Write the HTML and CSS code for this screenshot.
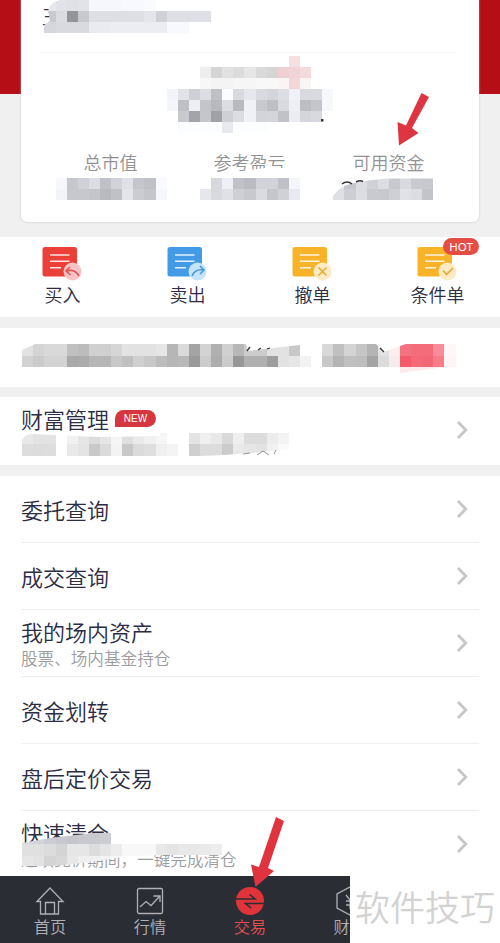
FILE: index.html
```html
<!DOCTYPE html>
<html lang="zh-CN">
<head>
<meta charset="utf-8">
<title>交易</title>
<link rel="stylesheet" href="styles.css">
</head>
<body>
<svg width="0" height="0" class="defs">
  <symbol id="sheet" viewBox="0 0 40 36"><rect x="0.5" y="1" width="34.5" height="29.5" rx="2.5" fill="currentColor"/><path d="M8 9H27.500M8 15.300H27.500M8 21.700H19" stroke="#fff" stroke-opacity=".85" stroke-width="1.500" fill="none"/></symbol>
  <symbol id="chev" viewBox="0 0 12 20"><path d="M2 2L9.800 10L2 18" fill="none" stroke="#c6c6c8" stroke-width="2.800"/></symbol>
</svg>
<main class="page">
  <header class="hero">
    <section class="card">
      <div class="name">王</div>
      <div class="stats">
        <div class="stat">总市值</div>
        <div class="stat">参考盈亏</div>
        <div class="stat">可用资金</div>
      </div>
    </section>
  </header>

  <nav class="actions">
    <a class="action"><svg class="red" width="40" height="36"><use href="#sheet"/><circle cx="30.500" cy="25.500" r="9" fill="#f7c3c4"/><path d="M28 21L24 25L28.500 29M24.500 25Q33 22.500 37 30" fill="none" stroke="#df5656" stroke-width="1.600"/></svg><span>买入</span></a>
    <a class="action"><svg class="blue" width="40" height="36"><use href="#sheet"/><circle cx="30.500" cy="25.500" r="9" fill="#c5e4fb"/><path d="M33 20L37 24L33 28M36.500 24Q28 22.500 25 30" fill="none" stroke="#4a9bdc" stroke-width="1.600"/></svg><span>卖出</span></a>
    <a class="action"><svg class="yellow" width="40" height="36"><use href="#sheet"/><circle cx="30.500" cy="25.500" r="9" fill="#fcebc4"/><path d="M26.500 21.500L34.500 29.500M34.500 21.500L26.500 29.500" fill="none" stroke="#e8aa32" stroke-width="1.600"/></svg><span>撤单</span></a>
    <a class="action"><svg class="yellow" width="40" height="36"><use href="#sheet"/><circle cx="30.500" cy="25.500" r="9" fill="#fcebc4"/><path d="M26 24.500L29.500 28.500L36 22" fill="none" stroke="#e8aa32" stroke-width="1.600"/></svg><span>条件单</span><b class="hot">HOT</b></a>
  </nav>

  <section class="notice"></section>

  <section class="row wealth">
    <div class="text"><div class="title">财富管理<span class="new">NEW</span></div><div class="sub">&nbsp;</div></div>
    <svg class="chev"><use href="#chev"/></svg>
  </section>

  <section class="list">
    <div class="row"><div class="title">委托查询</div><svg class="chev"><use href="#chev"/></svg></div>
    <div class="row"><div class="title">成交查询</div><svg class="chev"><use href="#chev"/></svg></div>
    <div class="row"><div class="text"><div class="title">我的场内资产</div><div class="sub">股票、场内基金持仓</div></div><svg class="chev"><use href="#chev"/></svg></div>
    <div class="row"><div class="title">资金划转</div><svg class="chev"><use href="#chev"/></svg></div>
    <div class="row"><div class="title">盘后定价交易</div><svg class="chev"><use href="#chev"/></svg></div>
    <div class="row"><div class="text"><div class="title">快速清仓</div><div class="sub">连续竞价期间，一键完成清仓</div></div><svg class="chev"><use href="#chev"/></svg></div>
  </section>

  <footer class="tabs">
    <a class="tab"><svg width="30" height="30"><path d="M2 15.500L15 2L28 15.500H23.500V28H5.500V15.500H2ZM10.500 28V16.500H19.500V28" fill="none" stroke="currentColor" stroke-width="1.300"/></svg><span>首页</span></a>
    <a class="tab"><svg width="30" height="30"><rect x="2.500" y="2.500" width="25" height="25" rx="1.500" fill="none" stroke="currentColor" stroke-width="1.300"/><path d="M5 21L11 15.500L16 19.500L24.500 10.500M18.500 10H25V16" fill="none" stroke="currentColor" stroke-width="1.300"/></svg><span>行情</span></a>
    <a class="tab on"><svg width="30" height="30"><circle cx="15" cy="15" r="14" fill="#e0333a"/><path d="M1 13H20L14.500 8.500M29 17.500H10.500L16 22" fill="none" stroke="#2b2d35" stroke-width="1.600"/></svg><span>交易</span></a>
    <a class="tab cut"><svg width="30" height="30"><path d="M15 1L28 8V22L15 29L2 22V8Z" fill="none" stroke="currentColor" stroke-width="1.300"/><path d="M11 9L15 14L19 9M11 15H19M11 19H19M15 14V23" fill="none" stroke="currentColor" stroke-width="1.300"/></svg><span>财</span></a>
    <div class="mark">软件技巧</div>
  </footer>

  <svg class="overlay" width="500" height="943" viewBox="0 0 500 943">
    <defs>
      <clipPath id="nameClip"><path d="M44 34V25L50 21L48 11Q50 2 60 0H220V34Z"/></clipPath>
      <clipPath id="fundClip"><path d="M333 200V196Q340 186 350 184Q375 178 400 178.500H434V200Z"/></clipPath>
      <clipPath id="noticeClip"><path d="M22 367V350L35 344H246L248 351L300 345V344H376L384 352L400 346L406 344H460V367Z"/></clipPath>
      <clipPath id="wealthClip"><path d="M22 456V440Q25 434 32 434L100 437L160 436V432H290V449Q240 455 200 456Z"/></clipPath>
      <clipPath id="clearClip"><path d="M22 866V843L50 838L111 831V844H230V855H160L122 857Q80 864 50 866Z"/></clipPath>
    </defs>
    <path d="M40 52.500H457" stroke="#f5f5f5"/>
    <path d="M50 3H58V27H68V34H44V26H50Z" fill="#fff"/>
    <path d="M265 168H290V175H235V172Z" fill="#fff"/>
    <g id="mosaic" shape-rendering="crispEdges"></g>
    <path d="M342 184Q347 180 352 184M356 182Q360 180 363 181.500" fill="none" stroke="#34353c" stroke-width="1.500"/>
    <rect x="321" y="119" width="2.500" height="2.500" fill="#333"/>
    <path d="M247 351L250 347M258 350L261 348M267 349L270 348M380 348L384 352" stroke="#333" stroke-width="1.300"/>
    <path d="M243 454L250 453M257 455L263 451L269 455M274 454L276 450" fill="none" stroke="#777" stroke-width=".8"/>
    <path d="M400 367V373L445 367Z" fill="#fdebed"/>
    <path d="M421.500 93L429 97L412 128L418.500 133L399 145.500L397.500 122L406 125.500Z" fill="#dd3640"/>
    <path d="M276 817L284 821L268 868L274 871L255.500 887L251 864.500L259 867Z" fill="#e0333e"/>
  </svg>
</main>
<script src="script.js"></script>
</body>
</html>
```
FILE: styles.css
```css
* { box-sizing: border-box; }
body { margin: 0; background: #f0f0f1; font-family: "Noto Sans CJK SC", sans-serif; font-weight: 350; color: #2c2c44; }
.page { position: relative; width: 500px; height: 943px; overflow: hidden; display: flex; flex-direction: column; }
.defs { position: absolute; }

.hero { height: 237px; padding: 0 21px; background: linear-gradient(#b50e17 94px, #f0f0f1 94px); }
.card { height: 222px; padding: 2px 20px 0; background: #fff; border-radius: 0 0 6px 6px; box-shadow: 0 0 2px #bbb; display: flex; flex-direction: column; justify-content: space-between; }
.name { margin-left: 1px; font-size: 20px; line-height: 29px; }
.stats { display: grid; grid-template-columns: repeat(3, 139px); padding-bottom: 47px; }
.stat { text-align: center; font-size: 18px; line-height: 26px; color: #929294; }

.actions { height: 80px; flex: none; background: #fff; display: grid; grid-template-columns: repeat(4, 125px); }
.action { position: relative; display: flex; flex-direction: column; align-items: center; padding-top: 9px; font-size: 18px; line-height: 26px; }
.action svg { flex: none; margin-right: 2px; }
.action span { margin-top: -1px; }
.red { color: #ea4038; }
.blue { color: #439be6; }
.yellow { color: #f9b329; }
.hot { position: absolute; left: 68px; top: 1px; width: 36px; height: 17px; border-radius: 9px; background: #e34d44; color: #fff; font: 11.500px/17px "Noto Sans", sans-serif; text-align: center; }

.notice { flex: none; height: 59px; margin-top: 11px; background: #fff; }
.row { height: 67px; padding: 0 32px 2px 21px; display: flex; align-items: center; justify-content: space-between; background: #fff; }
.wealth { flex: none; margin-top: 10px; height: 68px; }
.title { display: flex; align-items: center; font-size: 22px; line-height: 30px; }
.sub { font-size: 16.600px; line-height: 24px; color: #9c9ca0; }
.new { margin-left: 6px; width: 41px; height: 17px; border-radius: 9px 9px 9px 0; background: #d63640; color: #fff; font: 10px/17px "Liberation Sans", sans-serif; text-align: center; }
.chev { width: 12px; height: 20px; flex: none; }
.list { flex: none; height: 400px; margin-top: 11px; background: #fff; overflow: hidden; }
.list .row { background: linear-gradient(#efeff0, #efeff0) 21px 100% / 458px 1px no-repeat; }
.list .row:last-child { background: none; }

.tabs { position: relative; flex: none; height: 67px; background: #2b2d35; display: grid; grid-template-columns: repeat(5, 100px); color: #b0b1b5; }
.tab { display: flex; flex-direction: column; align-items: center; padding-top: 10px; font-size: 16.200px; line-height: 21px; }
.tab svg { flex: none; }
.cut span { width: 33px; }
.on { color: #e84c52; }
.mark { position: absolute; left: 350px; top: 0; width: 150px; height: 67px; background: #fff; color: #d2d2d2; font-size: 35px; line-height: 60px; font-weight: 350; text-align: center; }
.overlay { position: absolute; left: 0; top: 0; pointer-events: none; }
```
FILE: script.js
```js
// Privacy mosaic: [column, row, gray levels or full colours, cool tint, clip id]; "--" leaves a cell empty.
const CELL = 500 / 45;
const strips = [
  [4, 0, "e6 e2 e0 e2 f6 f6 f6 f8 f8 fa", 1, "nameClip"],
  [4, 1, "c9 db 93 c8 de de de de de e4 d0 df df df df", 1, "nameClip"],
  [4, 2, "d6 d9 d9 d9 ea ea ec ec ec ec ec f8 f8", 1, "nameClip"],
  [26, 5, "f6dfe1"],
  [18, 6, "ee d5 e2 dc e6 da d6 efcfd1 f2d4d6 f3dadc"],
  [18, 7, "f7 f4 f4 f6 f6 f8 f8 fbf4f4 f4d6d8 fbf5f5"],
  [15, 8, "f3 e2 cf dd bf fb d9 e6 d9 d4 dd f1 d9 d9 f7", 1],
  [15, 9, "f4 bf ee c4 b8 dc b8 f0 c9 be d9 ee bd c5 f7", 1],
  [16, 10, "c8 a3 c5 a1 cf dc f0 d3 d4 c1 ec d5 d8", 1],
  [16, 11, "fc fc fc fc e8 fc fc fc", 1],
  [5, 16, "f6 c6 d0 dc c0 d2 e0 c5 c0 f9", 1],
  [5, 17, "f3 c7 c7 c4 b9 c0 e4 cb c5 f6", 1],
  [19, 16, "d7 ef c1 bb d2 d2 c0 f5", 1],
  [18, 17, "e6 d8 e0 cf c8 da c5 d0 e9", 1],
  [30, 16, "e6 c6 dc d0 dc c8 d8 c9 c7", 1, "fundClip"],
  [30, 17, "df cd dc c9 c8 cf e1 dc c3", 1, "fundClip"],
  [2, 31, "e2 d4 d9 d9 c0 bc d0 d0 d6 e2 e2 e2 e6 b6 da a4 d3 b0 d0 b7 cc cc e2 e2 c8 -- -- d8 c0 d4 c6 b4 e2 fceeef f57080 f46b7a f46b7a f98c98 fff7f7", 0, "noticeClip"],
  [2, 32, "d2 cb d3 d3 a9 ab b6 b6 c8 c0 d0 c8 bd b6 b8 9a cc ad cc 97 b0 b0 9e e2 e6 f2 -- c8 b4 c0 be a4 dc f7eced f25a6c f46878 f26677 f77c88 fff5f6", 0, "noticeClip"],
  [2, 39, "e8 e3 e3 -- f1 e6 dc e6 f5 df ea f1 f6 -- -- e4 ef e9 d9 ef dc dc ec f3", 0, "wealthClip"],
  [2, 40, "dd dc dd -- e9 e4 c9 db f3 c8 db df f0 f4 -- cf dc dc cb e9 e6 e3 f1 fa", 0, "wealthClip"],
  [2, 75, "d8 d2 cc c8 c5 c8 c9 cc", 1, "clearClip"],
  [2, 76, "e0 e0 dc d4 e6 e6 dc e4 ed f8 f8 f8 e8 e4 e8 e8 e9 ec", 0, "clearClip"],
  [2, 77, "e6 e2 d4 d8 e8 ef f0 f3 f8", 0, "clearClip"]
];
const NS = "http://www.w3.org/2000/svg";
const mosaic = document.getElementById("mosaic");
for (const [col, row, cells, cool, clip] of strips) {
  const group = document.createElementNS(NS, "g");
  if (clip) group.setAttribute("clip-path", `url(#${clip})`);
  cells.split(" ").forEach((c, i) => {
    if (c === "--") return;
    let fill = "#" + c;
    if (c.length === 2) {
      const v = parseInt(c, 16);
      fill = `rgb(${v},${v + (cool ? 1 : 0)},${Math.min(255, v + (cool ? 7 : 0))})`;
    }
    const rect = document.createElementNS(NS, "rect");
    const x = Math.round((col + i) * CELL), y = Math.round(row * CELL);
    rect.setAttribute("x", x);
    rect.setAttribute("y", y);
    rect.setAttribute("width", Math.round((col + i + 1) * CELL) - x);
    rect.setAttribute("height", Math.round((row + 1) * CELL) - y);
    rect.setAttribute("fill", fill);
    group.appendChild(rect);
  });
  mosaic.appendChild(group);
}
```
